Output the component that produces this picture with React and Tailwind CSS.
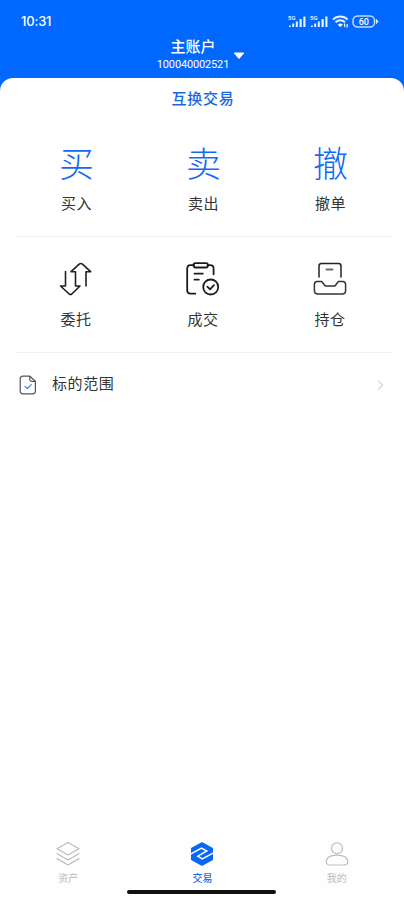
import { clsx } from "clsx";

const QUICK_ACTIONS = [
  { glyph: "买", label: "买入" },
  { glyph: "卖", label: "卖出" },
  { glyph: "撤", label: "撤单" },
];

const QUERY_ACTIONS = [
  { icon: OrderIcon, label: "委托" },
  { icon: DealIcon, label: "成交" },
  { icon: PositionIcon, label: "持仓" },
];

const TABS = [
  { icon: AssetsIcon, label: "资产" },
  { icon: TradeIcon, label: "交易", active: true },
  { icon: ProfileIcon, label: "我的" },
];

function SignalIcon() {
  return (
    <svg width="19" height="13" viewBox="0 0 19 13" fill="#fff" fillOpacity="0.9">
      <text x="0" y="4.8" fontSize="6" fontWeight="700" fontFamily="Roboto, sans-serif">
        5G
      </text>
      <rect x="1" y="10.5" width="1.8" height="1.5" />
      <rect x="4.2" y="8.5" width="2" height="3.5" />
      <rect x="7.8" y="6.5" width="2" height="5.5" />
      <rect x="11.5" y="4" width="2.2" height="8" />
      <rect x="15.3" y="1.5" width="2.2" height="10.5" />
    </svg>
  );
}

function WifiIcon() {
  return (
    <svg width="17" height="13" viewBox="0 0 17 13" fill="none" stroke="#fff" strokeOpacity="0.9" strokeWidth="2">
      <path d="M1 4.6C5 .6 11.6.6 15.6 4.6" />
      <path d="M3.6 7.3c2.8-2.6 6.6-2.6 9.4 0" />
      <path d="M6 9.6c1.4-1.2 3.2-1.2 4.6 0L8.3 12z" fill="#fff" strokeWidth="0.5" />
      <path d="M12.6 8.5v3.5M15.2 9v3.5" strokeWidth="1.3" />
    </svg>
  );
}

function BatteryIcon() {
  return (
    <svg width="27" height="13" viewBox="0 0 27 13" fill="none" stroke="#fff" strokeOpacity="0.75">
      <rect x="1" y="1" width="21.5" height="11" rx="4.5" strokeWidth="1.5" />
      <path d="M24.3 4.2v4.6l1.7-2.3z" fill="#fff" strokeWidth="0.7" />
      <text
        x="11.8"
        y="9.8"
        textAnchor="middle"
        fontSize="9"
        fontWeight="500"
        fontFamily="Roboto, sans-serif"
        fill="#fff"
        stroke="none"
      >
        60
      </text>
    </svg>
  );
}

function OrderIcon() {
  return (
    <svg width="34" height="36" viewBox="0 0 34 36" fill="none" stroke="#202020" strokeWidth="1.6" strokeLinejoin="round" strokeLinecap="round">
      <path d="M6.5 10.5V25H1.5L10.2 33Q11.5 33.9 12.8 33L21 25H16.5V10.7H12L20.5 2.9Q21.8 2 23.1 2.9L31.7 10.7H27V25" />
    </svg>
  );
}

function DealIcon() {
  return (
    <svg width="34" height="36" viewBox="1 0 34 36" fill="none" stroke="#1c1c1c" strokeWidth="1.8" strokeLinecap="round" strokeLinejoin="round">
      <path d="M9 4.2H5.5Q2.2 4.2 2.2 7.7V29.5Q2.2 32.7 5.5 32.7H10.3" />
      <path d="M22.5 4.2H25.2Q28.6 4.2 28.6 7.7V13.3" />
      <path d="M10.5 2.2H21Q23 2.2 23 4.3Q23 6.5 21 6.5H10.5Q8.5 6.5 8.5 4.3Q8.5 2.2 10.5 2.2Z" />
      <path d="M9.5 12.7H17.8M9.5 18.7H13.8" />
      <circle cx="25.7" cy="26" r="7.5" />
      <path d="M22.4 25.7L25 28.3L29 24.2" />
    </svg>
  );
}

function PositionIcon() {
  return (
    <svg width="34" height="36" viewBox="0 0 34 36" fill="none" stroke="#222" strokeWidth="1.5" strokeLinecap="round" strokeLinejoin="round">
      <path d="M6 16V5Q6 2.5 8.5 2.5H25.5Q28 2.5 28 5V16" />
      <path d="M13.5 8.5H19.5" stroke="#666" strokeWidth="1.8" />
      <path d="M4.2 20.5H8.7L12.3 25H21.9L25.4 20.5H29.7Q32.6 20.5 32.6 23.7V29.5Q32.6 33 29.2 33H4.8Q1.4 33 1.4 29.5V23.7Q1.4 20.5 4.2 20.5Z" stroke="#333" />
    </svg>
  );
}

function AssetsIcon() {
  return (
    <svg width="26" height="26" viewBox="0 0 26 26" fill="none" stroke="#b9b9b9" strokeWidth="1.1" strokeLinejoin="round" strokeLinecap="round">
      <path d="M13 1.5L24 7.8L13 14L2 7.8Z" />
      <path d="M2 12.8L13 19L24 12.8" />
      <path d="M2 17.5L13 24L24 17.5" />
    </svg>
  );
}

function TradeIcon() {
  return (
    <svg width="26" height="26" viewBox="0 0 26 26">
      <path d="M13 2.2L23 7.6V18.4L13 23.8L3 18.4V7.6Z" fill="#0768f8" stroke="#0768f8" strokeWidth="2" strokeLinejoin="round" />
      <path d="M1.5 13.2L12.5 7L17.8 10L8.8 15.2L13.2 18L24.5 11.8" fill="none" stroke="#fff" strokeWidth="1.5" />
    </svg>
  );
}

function ProfileIcon() {
  return (
    <svg width="26" height="26" viewBox="0 0 26 26" fill="none" stroke="#bdbdbd" strokeWidth="1.2">
      <circle cx="13" cy="7.3" r="5.5" />
      <path d="M7.5 14.8Q13 13.5 18.5 14.8Q23.8 16.3 23.8 20.5Q23.8 24 20 24H6Q2.2 24 2.2 20.5Q2.2 16.3 7.5 14.8Z" />
    </svg>
  );
}

function DocumentIcon() {
  return (
    <svg width="18" height="20" viewBox="0 0 18 20" fill="none" stroke="#555" strokeWidth="1.2" strokeLinejoin="round">
      <path d="M4 1.2H10.8L16.4 6.3V16Q16.4 18.8 13.6 18.8H4Q1.2 18.8 1.2 16V4Q1.2 1.2 4 1.2Z" />
      <path d="M10.8 1.2V4.5Q10.8 6.3 12.6 6.3H16.4" />
      <path d="M6 11.5L8.5 13.5L12.3 9.7" stroke="#3f83ee" strokeLinecap="round" />
    </svg>
  );
}

function StatusBar() {
  return (
    <div className="flex h-[35px] items-center justify-between pl-[21px] pr-[25px] pt-[7px]">
      <span className="font-['Inter','Roboto',sans-serif] text-[13px] font-medium leading-none tracking-[-0.2px]">10:31</span>
      <div className="flex items-center gap-[3px]">
        <SignalIcon />
        <SignalIcon />
        <WifiIcon />
        <BatteryIcon />
      </div>
    </div>
  );
}

function AccountSwitcher() {
  return (
    <button className="flex w-full items-center justify-center gap-[4px] pr-[2px]">
      <span className="flex flex-col items-center">
        <span className="text-[15px] font-medium leading-[22px]">主账户</span>
        <span className="font-['Roboto',sans-serif] text-[11px] leading-[15px] tracking-[-0.15px]">100040002521</span>
      </span>
      <svg width="12" height="8" viewBox="0 0 12 8" className="mt-[5px]">
        <path d="M1.2 1H10.8L6 6.6Z" fill="#fff" stroke="#fff" strokeLinejoin="round" />
      </svg>
    </button>
  );
}

export default function App() {
  return (
    <div className="flex h-[900px] w-[404px] flex-col overflow-hidden bg-[#0068ff] font-['Noto_Sans_CJK_SC',sans-serif] text-[#333]">
      <header className="h-[78px] shrink-0 text-white">
        <StatusBar />
        <AccountSwitcher />
      </header>

      <main className="flex flex-1 flex-col rounded-t-[13px] bg-white">
        <h1 className="h-[41px] pl-[2px] text-center text-[15px] font-medium leading-[39px] tracking-[0.7px] text-[#1767e2]">
          互换交易
        </h1>

        <div className="grid h-[117px] grid-cols-3 pl-[13px] pr-[10px] pt-[21px]">
          {QUICK_ACTIONS.map((item) => (
            <button key={item.label} className="flex flex-col items-center">
              <span className="text-[35px] font-light leading-[44px] text-[#1269f3]">{item.glyph}</span>
              <span className="mt-[8px] text-[15px] leading-[22px] tracking-[0.5px]">{item.label}</span>
            </button>
          ))}
        </div>

        <div className="ml-[16px] grid h-[117px] w-[376px] grid-cols-[120px_134px_120px] border-y border-[#f2f2f2] pt-[24px]">
          {QUERY_ACTIONS.map(({ icon: Icon, label }) => (
            <button key={label} className="flex flex-col items-center">
              <Icon />
              <span className="mt-[11px] text-[15px] leading-[22px] tracking-[0.5px]">{label}</span>
            </button>
          ))}
        </div>

        <button className="flex h-[62px] w-full items-center pl-[19px] pr-[20px] pt-px">
          <DocumentIcon />
          <span className="ml-[15px] pb-[3px] text-[15px] tracking-[0.6px]">标的范围</span>
          <svg width="7" height="12" viewBox="0 0 7 12" className="ml-auto" fill="none" stroke="#bbb">
            <path d="M1 1.5L5.7 6L1 10.5" />
          </svg>
        </button>

        <nav className="mt-auto flex h-[65px] flex-col items-center bg-[#fefefe]">
          <div className="grid w-full grid-cols-3 pl-px pt-[6px]">
            {TABS.map(({ icon: Icon, label, active }) => (
              <button
                key={label}
                className={clsx(
                  "flex flex-col items-center text-[10px] leading-[14px]",
                  active ? "font-medium text-[#1d6be5]" : "text-[#bcbcbc]"
                )}
              >
                <Icon />
                <span className="mt-[4px]">{label}</span>
              </button>
            ))}
          </div>
          <div className="mr-[2px] mt-[5px] h-[4px] w-[149px] rounded-full bg-[#111]" />
        </nav>
      </main>
    </div>
  );
}
